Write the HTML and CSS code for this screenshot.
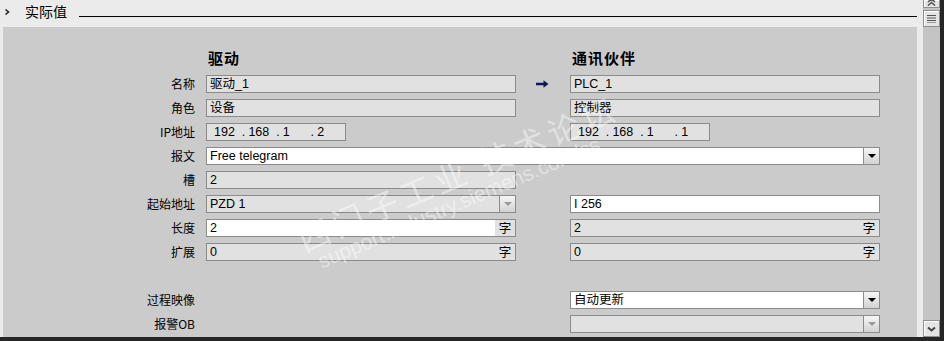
FILE: index.html
```html
<!DOCTYPE html>
<html lang="zh-CN">

<head>
    <meta charset="UTF-8">
    <title>实际值</title>
    <link rel="stylesheet" href="styles.css">
</head>

<body>
    <div class="window">
        <div class="main">
            <div class="content">
                <div class="section-head">
                    <svg class="chev" width="6" height="8" viewBox="0 0 6 8">
                        <polyline points="1.5,1.5 4.5,4 1.5,6.5" fill="none" stroke="#222" stroke-width="1.6" />
                    </svg>
                    <span class="section-title">实际值</span>
                    <span class="section-rule"></span>
                </div>

                <div class="panel">
                    <div class="form">
                        <div></div>
                        <div class="col-head">驱动</div>
                        <div></div>
                        <div class="col-head">通讯伙伴</div>

                        <div class="lbl">名称</div>
                        <div class="field">驱动_1</div>
                        <div class="link-arrow">
                            <svg width="13" height="8" viewBox="0 0 13 8">
                                <path d="M0 2.8h8.5v2.4H0z M7.5 0.3l5 3.7-5 3.7z" fill="#14145a" />
                            </svg>
                        </div>
                        <div class="field">PLC_1</div>

                        <div class="lbl">角色</div>
                        <div class="field">设备</div>
                        <div></div>
                        <div class="field">控制器</div>

                        <div class="lbl">IP地址</div>
                        <div class="ip-cell">
                            <div class="field ip">
                                <span class="oct">192</span><span class="dot">.</span><span class="oct">168</span><span class="dot">.</span><span class="oct">1</span><span class="dot">.</span><span class="oct">2</span>
                            </div>
                        </div>
                        <div></div>
                        <div class="ip-cell">
                            <div class="field ip">
                                <span class="oct">192</span><span class="dot">.</span><span class="oct">168</span><span class="dot">.</span><span class="oct">1</span><span class="dot">.</span><span class="oct">1</span>
                            </div>
                        </div>

                        <div class="lbl">报文</div>
                        <div class="field wh select wide">
                            <span class="val">Free telegram</span>
                            <span class="drop"><i></i></span>
                        </div>

                        <div class="lbl">槽</div>
                        <div class="field">2</div>
                        <div></div>
                        <div></div>

                        <div class="lbl">起始地址</div>
                        <div class="field select">
                            <span class="val">PZD 1</span>
                            <span class="drop off"><i></i></span>
                        </div>
                        <div></div>
                        <div class="field wh">I 256</div>

                        <div class="lbl">长度</div>
                        <div class="field wh num">
                            <span class="val">2</span>
                            <span class="unit">字</span>
                        </div>
                        <div></div>
                        <div class="field num">
                            <span class="val">2</span>
                            <span class="unit">字</span>
                        </div>

                        <div class="lbl">扩展</div>
                        <div class="field num">
                            <span class="val">0</span>
                            <span class="unit">字</span>
                        </div>
                        <div></div>
                        <div class="field num">
                            <span class="val">0</span>
                            <span class="unit">字</span>
                        </div>

                        <div class="spacer"></div>

                        <div class="lbl">过程映像</div>
                        <div></div>
                        <div></div>
                        <div class="field wh select">
                            <span class="val">自动更新</span>
                            <span class="drop"><i></i></span>
                        </div>

                        <div class="lbl">报警OB</div>
                        <div></div>
                        <div></div>
                        <div class="field select">
                            <span class="val"></span>
                            <span class="drop off"><i></i></span>
                        </div>
                    </div>

                    <!-- 水印 -->
                    <div class="watermark">
                        <div class="wm-cn">西门子工业&nbsp;技术论坛</div>
                        <div class="wm-en">support.industry.siemens.com/cs</div>
                    </div>
                </div>
            </div>

            <div class="gutter"></div>

            <div class="scrollbar">
                <div class="sb-btn sb-cut">
                    <svg width="9" height="8" viewBox="0 0 9 8">
                        <polyline points="1,4 4.5,1 8,4" fill="none" stroke="#555" stroke-width="1.6" />
                        <polyline points="1,7.5 4.5,4.5 8,7.5" fill="none" stroke="#555" stroke-width="1.6" />
                    </svg>
                </div>
                <div class="sb-btn sb-menu">
                    <svg width="9" height="8" viewBox="0 0 9 8">
                        <path d="M0 0.5h9M0 3h9M0 5.5h9M0 8h9" stroke="#555" stroke-width="1" />
                    </svg>
                </div>
                <div class="sb-track"></div>
                <div class="sb-btn sb-down">
                    <svg width="9" height="6" viewBox="0 0 9 6">
                        <polyline points="1,1.5 4.5,4.5 8,1.5" fill="none" stroke="#444" stroke-width="2" />
                    </svg>
                </div>
            </div>

            <div class="edge"></div>
        </div>
        <div class="bottom-bar"></div>
    </div>
</body>

</html>
```

FILE: styles.css
```css
html,
body {
    margin: 0;
    padding: 0;
}

body {
    width: 944px;
    height: 341px;
    overflow: hidden;
    background-color: #ebebeb;
    font-family: "Liberation Sans", "Noto Sans CJK SC", sans-serif;
    font-size: 12px;
    color: #000;
}

.window {
    display: flex;
    flex-direction: column;
    height: 341px;
}

.main {
    display: flex;
    flex: 1;
    min-height: 0;
}

.content {
    display: flex;
    flex-direction: column;
    width: 917px;
}

/* 标题行 */
.section-head {
    display: flex;
    align-items: center;
    height: 27px;
    flex: none;
    padding-left: 4px;
}

.chev {
    margin-top: -3px;
}

.section-title {
    margin-left: 15px;
    font-family: "Noto Sans CJK SC", sans-serif;
    font-size: 14px;
    line-height: 14px;
    margin-top: -5px;
}

.section-rule {
    flex: 1;
    height: 1px;
    background-color: #000;
    margin-left: 12px;
    margin-top: 6px;
}

/* 灰色面板 */
.panel {
    position: relative;
    flex: 1;
    margin-left: 3px;
    background-color: #cbcbcb;
    overflow: hidden;
}

.form {
    display: grid;
    grid-template-columns: 203px 310px 54px 310px;
    grid-template-rows: 21px;
    grid-auto-rows: 18px;
    row-gap: 6px;
    padding-top: 21px;
}

.col-head {
    font-family: "Noto Sans CJK SC", sans-serif;
    font-weight: 700;
    font-size: 15px;
    letter-spacing: 1px;
    line-height: 19px;
    padding-left: 2px;
}

.lbl {
    text-align: right;
    padding-right: 11px;
    line-height: 18px;
    font-family: "Noto Sans CJK SC", sans-serif;
}

.spacer {
    grid-column: 1 / -1;
}

.link-arrow {
    display: flex;
    align-items: center;
    padding-left: 20px;
}

.field {
    display: flex;
    align-items: center;
    box-sizing: border-box;
    height: 18px;
    line-height: 16px;
    border: 1px solid #8b8b8b;
    background-color: #e1e1e1;
    padding-left: 3px;
    white-space: nowrap;
    overflow: hidden;
    font-size: 12.5px;
}

.field.wh {
    background-color: #fff;
}

.wide {
    grid-column: 2 / 5;
}

.val {
    flex: 1;
}

.drop {
    align-self: stretch;
    width: 15px;
    border-left: 1px solid #8b8b8b;
    background: linear-gradient(#f6f6f6, #d2d2d2);
    display: flex;
    align-items: center;
    justify-content: center;
}

.drop i {
    width: 0;
    height: 0;
    border-left: 4px solid transparent;
    border-right: 4px solid transparent;
    border-top: 4px solid #000;
}

.drop.off i {
    border-top-color: #9a9a9a;
}

.num .unit {
    align-self: stretch;
    width: 20px;
    background-color: #e1e1e1;
    text-align: center;
    line-height: 16px;
    font-family: "Noto Sans CJK SC", sans-serif;
}

.ip-cell {
    display: flex;
}

.field.ip {
    width: 140px;
    padding-left: 7px;
}

.oct {
    display: inline-block;
    width: 29px;
}

.dot {
    display: inline-block;
    width: 7px;
}

/* 水印 */
.watermark {
    position: absolute;
    left: 288px;
    top: 195px;
    transform: rotate(-23deg);
    transform-origin: 0 0;
    color: rgba(255, 255, 255, 0.45);
    pointer-events: none;
    white-space: nowrap;
}

.wm-cn {
    font-family: "Noto Sans CJK SC", sans-serif;
    font-size: 32px;
    letter-spacing: 5px;
    line-height: 38px;
}

.wm-en {
    font-family: "Liberation Sans", sans-serif;
    font-size: 21px;
    line-height: 20px;
    padding-left: 10px;
}

/* 右侧滚动条 */
.gutter {
    width: 6px;
    flex: none;
}

.scrollbar {
    display: flex;
    flex-direction: column;
    width: 17px;
    flex: none;
    background-color: #c4c4c4;
}

.sb-btn {
    box-sizing: border-box;
    display: flex;
    align-items: center;
    justify-content: center;
    background-color: #e4e4e4;
    border: 1px solid #8f8f8f;
    box-shadow: inset 1px 1px 0 #fff;
}

.sb-cut {
    height: 8px;
    border-top: none;
    align-items: flex-end;
    padding-bottom: 1px;
    overflow: hidden;
}

.sb-menu {
    height: 17px;
    margin-top: 2px;
}

.sb-track {
    flex: 1;
}

.sb-down {
    height: 17px;
}

.edge {
    width: 4px;
    flex: none;
    background-color: #262626;
}

.bottom-bar {
    height: 4px;
    flex: none;
    background-color: #262626;
}
```
